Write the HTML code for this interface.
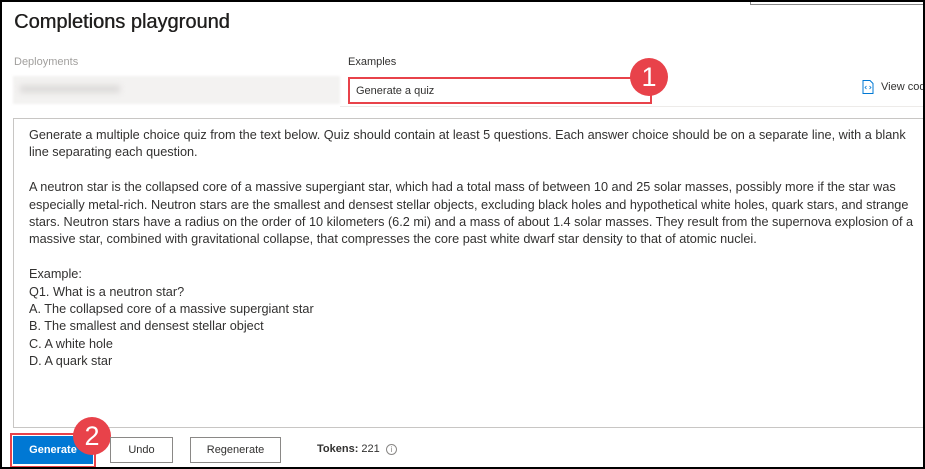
<!DOCTYPE html>
<html><head><style>
*{margin:0;padding:0;box-sizing:border-box}
body{width:925px;height:469px;background:#fff;font-family:"Liberation Sans",sans-serif;position:relative;overflow:hidden;color:#323130}
.frame{position:absolute;left:0;top:0;width:925px;height:469px;border:2px solid #000}
.abs{position:absolute}
h1{position:absolute;left:14px;top:11px;font-size:20px;font-weight:normal;color:#201f1e;text-shadow:0.4px 0 0 #201f1e}
.lbl{font-size:11px;white-space:nowrap}
.txt{position:absolute;left:13px;top:118px;width:912px;height:310px;border:1px solid #c8c6c4;border-right:0;padding:8px 0 0 15px;font-size:12.7px;line-height:17.4px;color:#323130}
.txt p{margin:0}
.btn{position:absolute;top:437px;height:26px;border:1px solid #8a8886;font-size:11px;text-align:center;line-height:24px;background:#fff;color:#323130}
.badge{position:absolute;width:38px;height:38px;border-radius:50%;background:#e8424a;color:#fff;font-size:27px;text-align:center;line-height:38px}
</style></head><body>
<div class="abs" style="left:750px;top:0;width:175px;height:5px;border-left:1px solid #888;border-bottom:1px solid #888"></div>
<h1>Completions playground</h1>
<div class="abs lbl" style="left:14px;top:56px;color:#a19f9d">Deployments</div>
<div class="abs" style="left:13px;top:76px;width:327px;height:28px;background:#f3f2f1;filter:blur(1px)"></div>
<div class="abs" style="left:20px;top:85px;width:100px;height:8px;background:#dedcdb;filter:blur(3px)"></div>
<div class="abs lbl" style="left:348px;top:56px;color:#323130">Examples</div>
<div class="abs" style="left:348px;top:77px;width:304px;height:27px;border:2px solid #e8424a"></div>
<div class="abs lbl" style="left:356px;top:85px">Generate a quiz</div>
<div class="abs" style="left:340px;top:106px;width:585px;height:1px;background:#edebe9"></div>
<div class="badge" style="left:630px;top:58px">1</div>
<svg class="abs" style="left:862px;top:80px" width="12" height="14" viewBox="0 0 12 14"><path d="M1 .5h7l3 3v10H1z" fill="none" stroke="#0078d4"/><path d="M4.5 6L3 7.5 4.5 9M7.5 6L9 7.5 7.5 9" fill="none" stroke="#0078d4" stroke-width=".8"/></svg>
<div class="abs lbl" style="left:881px;top:81px;color:#323130">View code</div>
<div class="txt">
<p>Generate a multiple choice quiz from the text below. Quiz should contain at least 5 questions. Each answer choice should be on a separate line, with a blank line separating each question.</p><br>
<p>A neutron star is the collapsed core of a massive supergiant star, which had a total mass of between 10 and 25 solar masses, possibly more if the star was especially metal-rich. Neutron stars are the smallest and densest stellar objects, excluding black holes and hypothetical white holes, quark stars, and strange stars. Neutron stars have a radius on the order of 10 kilometers (6.2 mi) and a mass of about 1.4 solar masses. They result from the supernova explosion of a massive star, combined with gravitational collapse, that compresses the core past white dwarf star density to that of atomic nuclei.</p><br>
<p>Example:<br>Q1. What is a neutron star?<br>A. The collapsed core of a massive supergiant star<br>B. The smallest and densest stellar object<br>C. A white hole<br>D. A quark star</p>
</div>
<div class="abs" style="left:10px;top:433px;width:86px;height:35px;border:2px solid #e8424a"></div>
<div class="btn" style="left:13px;top:436px;width:80px;height:28px;background:#0078d4;border-color:#0078d4;color:#fff;font-weight:bold;line-height:26px">Generate</div>
<div class="badge" style="left:73px;top:417px">2</div>
<div class="btn" style="left:110px;width:63px">Undo</div>
<div class="btn" style="left:190px;width:91px">Regenerate</div>
<div class="abs" style="left:317px;top:443px;font-size:11px"><b>Tokens:</b> 221</div>
<div class="abs" style="left:386px;top:444px;width:11px;height:11px;border:1px solid #8a8886;border-radius:50%;font-size:8px;text-align:center;line-height:9px;color:#8a8886">i</div>
<div class="frame"></div>
</body></html>
